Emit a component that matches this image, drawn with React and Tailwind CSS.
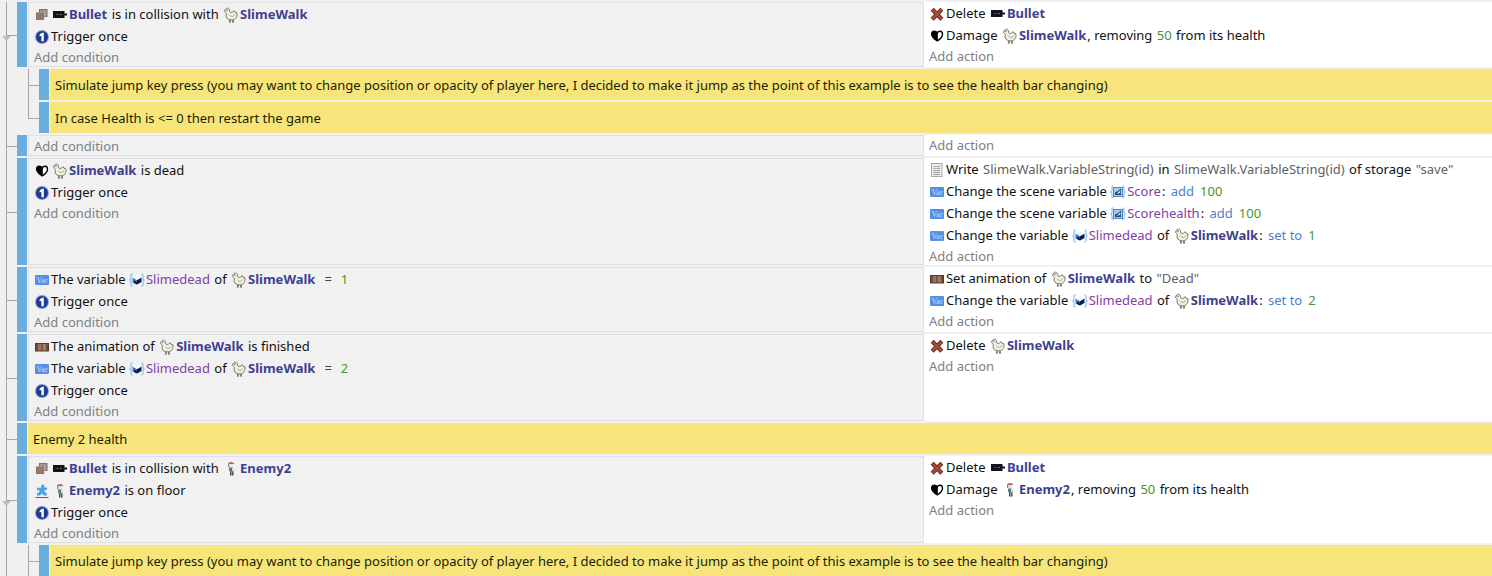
import React from "react";

function Icon({ children }) {
  return (
    <svg viewBox="0 0 16 16" className="mr-px size-4 shrink-0" aria-hidden="true">
      {children}
    </svg>
  );
}

const Collision = () => (
  <Icon>
    <rect x="5.500" y="2.500" width="7.500" height="7" fill="#a3968d" stroke="#7d7169" strokeWidth="1" />
    <rect x="2" y="5.500" width="8.500" height="7.500" fill="#d9d2cc" />
    <rect x="2.500" y="6" width="7" height="6.500" fill="#96796a" stroke="#8a7264" strokeWidth="1" />
  </Icon>
);

const BulletIcon = () => (
  <Icon>
    <rect x="1" y="4" width="11.500" height="7" fill="#14121c" />
    <rect x="12" y="6.500" width="3" height="2" fill="#14121c" />
    <path d="M4.500 7.500h2M8 7.500h2" stroke="#7a6570" strokeWidth="1" />
  </Icon>
);

const Chicken = () => (
  <Icon>
    <path
      d="M2.600 2C3.600.800 5.600.900 6.200 2.200c.5 1 .2 2.300.9 3 .8.7 1.800.4 2.600-.3l1.500-1.200.9 1.600 1.700.4c.4 1.700.2 3.600-.7 5-.9 1.400-2.400 2.200-4.200 2.200-2.600 0-4.900-.8-5.700-3-.4-1.100.2-2.200.1-3.400C3.300 5.600 1.900 5.300 1.400 4.300z"
      fill="#f0f0e0"
      stroke="#77756a"
      strokeWidth="1"
      strokeLinejoin="round"
    />
    <path d="M6.500 7.800c.8 1.800 3 2.200 4.400.9l.8-1.200" fill="none" stroke="#aaa894" strokeWidth="1" />
    <path d="M7 13v1.800M10 13v1.800M5.800 15h2M9 15h2" stroke="#6b5e42" strokeWidth="1.200" />
    <path d="M3.900 2.600v1.500" stroke="#3a3a36" strokeWidth=".9" />
  </Icon>
);

const Once = () => (
  <Icon>
    <circle cx="8" cy="8" r="6.900" fill="#7f97cf" />
    <circle cx="8" cy="8" r="6" fill="#1f3a92" />
    <path d="M5.600 5.600 8 3.800h1.800v8.400H7.400V6.800L5.600 7.600z" fill="#fff" />
  </Icon>
);

const Cross = () => (
  <Icon>
    <path d="M3.200 3.200 12.800 13.200M12.800 3.200 3.200 13.200" stroke="#5d3029" strokeWidth="4.200" />
    <path d="M3.200 3.200 12.800 13.200M12.800 3.200 3.200 13.200" stroke="#b24a36" strokeWidth="2.200" />
  </Icon>
);

const Heart = () => (
  <Icon>
    <path
      d="M8.300 12.800C5 10.800 2.700 8.800 2.700 6.200c0-1.800 1.200-3 2.700-3 1.200 0 2.300.7 2.900 1.700.5-1 1.500-1.700 2.700-1.700 1.500 0 2.500 1.200 2.500 3 0 2.600-2 4.600-5.200 6.600z"
      fill="#fff"
      stroke="#000"
      strokeWidth="1.400"
    />
    <path d="M8.800 12.900C5 10.800 2.300 8.800 2.300 6.200c0-1.900 1.400-3.200 3-3.200 1.500 0 3 1 3.500 2z" fill="#000" />
  </Icon>
);

const Doc = () => (
  <Icon>
    <rect x="2.500" y="1.500" width="10.500" height="13" fill="#ebebeb" stroke="#a8a8a8" />
    <path
      d="M4.500 4.500h2M7.500 4.500H11M4.500 6.500h2M7.500 6.500H11M4.500 8.500H11M4.500 10.500H11M4.500 12.500H11"
      stroke="#a0a0a0"
      strokeWidth="1"
    />
  </Icon>
);

const VarIcon = () => (
  <Icon>
    <rect x="1" y="3" width="14" height="10" rx="1" fill="#5590e4" />
    <text x="8" y="11" textAnchor="middle" fontSize="8" fill="#c9defa" fontFamily="Liberation Serif, serif">
      Var
    </text>
  </Icon>
);

const Braces = () => (
  <path
    d="M3.800 2H3c-.8 0-1 .5-1 1.200v3c0 .9-.3 1.500-1.200 1.800C1.700 8.300 2 8.900 2 9.800v3c0 .7.2 1.200 1 1.200h.8M12.200 2h.8c.8 0 1 .5 1 1.200v3c0 .9.3 1.500 1.200 1.800-.9.300-1.200.9-1.200 1.800v3c0 .7-.2 1.200-1 1.200h-.8"
    fill="none"
    stroke="#86c2f0"
    strokeWidth="1.200"
  />
);

const SceneVar = () => (
  <Icon>
    <Braces />
    <rect x="3.500" y="3.500" width="9" height="9" fill="#a4cdf0" stroke="#4f88c4" strokeWidth="1" />
    <path d="M5 11V8.500L8 7l3-2.500V11z" fill="#1f4a80" />
    <path d="M6.500 10 10.300 6.300v2.500z" fill="#eaf4fc" />
  </Icon>
);

const ObjectVar = () => (
  <Icon>
    <Braces />
    <path d="M3.500 5.500 8 8v4.500L3.500 10.500z" fill="#3f78c4" />
    <path d="M12.500 5.500 8 8v4.500l4.500-2.500z" fill="#0c1c4c" />
    <path d="M5 8.500 8 10v2.500L5 11z" fill="#0c1c4c" />
    <path d="M3.500 5.500 8 3l4.500 2.500L8 8z" fill="#f4f9fe" />
  </Icon>
);

const Film = () => (
  <Icon>
    <rect x="1" y="4" width="14" height="8.500" fill="#54392c" />
    <rect x="2" y="5" width="2" height="6.500" fill="#6e4d3c" />
    <rect x="4" y="5" width="3" height="6.500" fill="#9a7260" />
    <rect x="7" y="5" width="2" height="6.500" fill="#7c5a48" />
    <rect x="9" y="5" width="3" height="6.500" fill="#a07c68" />
    <rect x="12" y="5" width="2" height="6.500" fill="#6e4d3c" />
  </Icon>
);

const Platformer = () => (
  <Icon>
    <path
      d="M7.200 2.600a1.700 1.700 0 0 1 3.300.2c0 .8-.4 1.200-.4 1.800H13v2.300h-2.200l-.3 1.500 2.300 2.200v1.900H9.800L8 10.500 6 12.500H3v-1.900l2.500-1.800V7.300H3V4.800h4.400c.1-.8-.2-1.200-.2-2.200z"
      fill="#48a4e4"
    />
    <path d="M1.500 14.500h13" stroke="#2f63b5" strokeWidth="1" />
  </Icon>
);

const Enemy = () => (
  <Icon>
    <path d="M4.800 3C5.300 1.500 7 .700 8.800 1c1.200.3 2.200 1 2.400 2z" fill="#c4606c" />
    <rect x="6" y="3" width="4" height="3" fill="#e9e4e0" />
    <path d="M5 3h1.200v3H5z" fill="#7f8a90" />
    <path d="M5.800 6.500h4l.7 4H6.300z" fill="#557a86" />
    <path d="M9 6.500h1.500v3.500H9z" fill="#d7dfe3" />
    <path d="M7 10.500h3.500V14.500H7z" fill="#3c4750" />
    <path d="M8.700 11v4" stroke="#b8c3c9" strokeWidth=".9" />
  </Icon>
);

const Obj = ({ icon: Glyph, children }) => (
  <span className="mr-px ml-px flex items-center">
    <Glyph />
    <b className="font-bold text-[#3f3f8f]">{children}</b>
  </span>
);
const Slime = () => <Obj icon={Chicken}>SlimeWalk</Obj>;
const Bullet = () => <Obj icon={BulletIcon}>Bullet</Obj>;
const Enemy2 = () => <Obj icon={Enemy}>Enemy2</Obj>;

const Variable = ({ icon: Glyph, children }) => (
  <span className="mr-px flex items-center text-[#8240a8]">
    <Glyph />
    {children}
  </span>
);
const Num = ({ children }) => <span className="mx-px text-[#4a9428]">{children}</span>;
const Str = ({ children }) => <span className="mx-px text-[#606060]">{children}</span>;
const Op = ({ children }) => <span className="mr-[5px] ml-0.5 text-[#4a7fd0]">{children}</span>;
const Equals = () => <span className="mx-2 text-[#444]">=</span>;

const Line = ({ icon: Glyph, children }) => (
  <div className="flex h-[22px] items-center pt-0.5 whitespace-pre">
    <Glyph />
    {children}
  </div>
);

const AddButton = ({ children }) => (
  <button type="button" className="flex h-[19px] cursor-pointer items-center pt-0.5 text-[#808080]">
    {children}
  </button>
);

function Branch({ last, foldable }) {
  return (
    <div className="relative flex w-[11px] shrink-0 flex-col">
      <div className="flex-1 border-l border-[#a6a6a6]" />
      <div className="h-px bg-[#a6a6a6]" />
      <div className={last ? "flex-1" : "flex-1 border-l border-[#a6a6a6]"} />
      {foldable && (
        <button
          type="button"
          aria-label="Fold sub-events"
          className="absolute top-1/2 -left-1 flex h-2 w-[9px] cursor-pointer items-start justify-center"
        >
          <svg viewBox="0 0 9 6" className="h-1.5 w-[9px]" aria-hidden="true">
            <path d="M0 0h9L4.500 5z" fill="#bdbdbd" />
          </svg>
        </button>
      )}
    </div>
  );
}

const Handle = () => <div className="mr-px mb-0.5 w-2.5 shrink-0 bg-[#6aaee0]" />;

function Event({ conditions, actions, foldable }) {
  return (
    <li className="flex">
      <Branch foldable={foldable} />
      <Handle />
      <div className="mb-0.5 flex min-w-0 flex-1 bg-white">
        <div className="w-[61.2%] shrink-0 border border-[#e0e0e2] bg-[#f1f1f2] pl-[5px]">
          {conditions}
          <AddButton>Add condition</AddButton>
        </div>
        <div className="min-w-0 flex-1 pl-[5px]">
          {actions}
          <AddButton>Add action</AddButton>
        </div>
      </div>
    </li>
  );
}

function Comment({ children, last }) {
  return (
    <li className="flex">
      <Branch last={last} />
      <Handle />
      <p className="mb-0.5 flex h-[31px] min-w-0 flex-1 items-center bg-[#f7e57b] pt-0.5 pl-[5px] whitespace-pre text-[#221e04]">
        {children}
      </p>
    </li>
  );
}

const SubEvents = ({ children }) => (
  <li className="flex">
    <div className="w-[22px] shrink-0 border-l border-[#a6a6a6]" />
    <ul className="min-w-0 flex-1">{children}</ul>
  </li>
);

const jumpNote =
  "Simulate jump key press (you may want to change position or opacity of player here, I decided to make it jump as the point of this example is to see the health bar changing)";

export default function App() {
  return (
    <main className="h-screen overflow-hidden bg-[#f0f0f1] pt-0.5 pl-1.5 font-['Noto_Sans',sans-serif] text-[13px] text-[#111]">
      <ul>
        <Event
          foldable
          conditions={
            <>
              <Line icon={Collision}><Bullet /> is in collision with <Slime /></Line>
              <Line icon={Once}>Trigger once</Line>
            </>
          }
          actions={
            <>
              <Line icon={Cross}>Delete <Bullet /></Line>
              <Line icon={Heart}>Damage <Slime />, removing <Num>50</Num> from its health</Line>
            </>
          }
        />
        <SubEvents>
          <Comment>{jumpNote}</Comment>
          <Comment last>{"In case Health is <= 0 then restart the game"}</Comment>
        </SubEvents>
        <Event />
        <Event
          conditions={
            <>
              <Line icon={Heart}><Slime /> is dead</Line>
              <Line icon={Once}>Trigger once</Line>
            </>
          }
          actions={
            <>
              <Line icon={Doc}>
                Write <Str>SlimeWalk.VariableString(id)</Str> in <Str>SlimeWalk.VariableString(id)</Str> of storage <Str>"save"</Str>
              </Line>
              <Line icon={VarIcon}>
                Change the scene variable <Variable icon={SceneVar}>Score</Variable>: <Op>add</Op> <Num>100</Num>
              </Line>
              <Line icon={VarIcon}>
                Change the scene variable <Variable icon={SceneVar}>Scorehealth</Variable>: <Op>add</Op> <Num>100</Num>
              </Line>
              <Line icon={VarIcon}>
                Change the variable <Variable icon={ObjectVar}>Slimedead</Variable> of <Slime />: <Op>set to</Op> <Num>1</Num>
              </Line>
            </>
          }
        />
        <Event
          conditions={
            <>
              <Line icon={VarIcon}>
                The variable <Variable icon={ObjectVar}>Slimedead</Variable> of <Slime /> <Equals /> <Num>1</Num>
              </Line>
              <Line icon={Once}>Trigger once</Line>
            </>
          }
          actions={
            <>
              <Line icon={Film}>Set animation of <Slime /> to <Str>"Dead"</Str></Line>
              <Line icon={VarIcon}>
                Change the variable <Variable icon={ObjectVar}>Slimedead</Variable> of <Slime />: <Op>set to</Op> <Num>2</Num>
              </Line>
            </>
          }
        />
        <Event
          conditions={
            <>
              <Line icon={Film}>The animation of <Slime /> is finished</Line>
              <Line icon={VarIcon}>
                The variable <Variable icon={ObjectVar}>Slimedead</Variable> of <Slime /> <Equals /> <Num>2</Num>
              </Line>
              <Line icon={Once}>Trigger once</Line>
            </>
          }
          actions={<Line icon={Cross}>Delete <Slime /></Line>}
        />
        <Comment>Enemy 2 health</Comment>
        <Event
          foldable
          conditions={
            <>
              <Line icon={Collision}><Bullet /> is in collision with <Enemy2 /></Line>
              <Line icon={Platformer}><Enemy2 /> is on floor</Line>
              <Line icon={Once}>Trigger once</Line>
            </>
          }
          actions={
            <>
              <Line icon={Cross}>Delete <Bullet /></Line>
              <Line icon={Heart}>Damage <Enemy2 />, removing <Num>50</Num> from its health</Line>
            </>
          }
        />
        <SubEvents>
          <Comment>{jumpNote}</Comment>
        </SubEvents>
      </ul>
    </main>
  );
}
